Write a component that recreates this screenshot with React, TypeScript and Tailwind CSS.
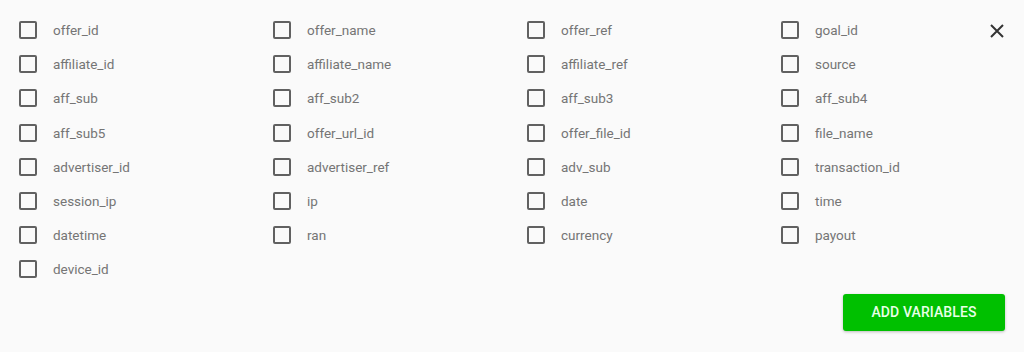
const variables = [
  "offer_id", "offer_name", "offer_ref", "goal_id",
  "affiliate_id", "affiliate_name", "affiliate_ref", "source",
  "aff_sub", "aff_sub2", "aff_sub3", "aff_sub4",
  "aff_sub5", "offer_url_id", "offer_file_id", "file_name",
  "advertiser_id", "advertiser_ref", "adv_sub", "transaction_id",
  "session_ip", "ip", "date", "time",
  "datetime", "ran", "currency", "payout",
  "device_id",
];

export default function App() {
  return (
    <div className="relative h-[352px] w-[1024px] overflow-hidden bg-[#fafafa] font-['Roboto',sans-serif]">
      <button className="absolute right-[19px] top-[23px] flex h-4 w-4 items-center justify-center text-[#333]">
        <svg width="16" height="16" viewBox="0 0 16 16" fill="none" stroke="currentColor" strokeWidth="2">
          <path d="M2 2L14 14M14 2L2 14" />
        </svg>
      </button>

      <div className="grid grid-cols-[254px_254px_254px_200px] pl-[19px] pt-[13px]">
        {variables.map((v) => (
          <label key={v} className="flex h-[34.2px] cursor-pointer items-center">
            <span className="h-[18px] w-[18px] shrink-0 rounded-[2px] border-2 border-[#616161]" />
            <span className="ml-4 text-[13.5px] text-[#757575]">{v}</span>
          </label>
        ))}
      </div>

      <div className="flex justify-end pr-[19px] pt-[7px]">
        <button className="h-[37px] w-[162px] rounded-[3px] bg-[#00c000] text-[14px] font-medium uppercase tracking-[0.1px] text-[#e8ffe8] shadow-[0_1px_3px_rgba(0,0,0,0.25)]">
          Add variables
        </button>
      </div>
    </div>
  );
}
